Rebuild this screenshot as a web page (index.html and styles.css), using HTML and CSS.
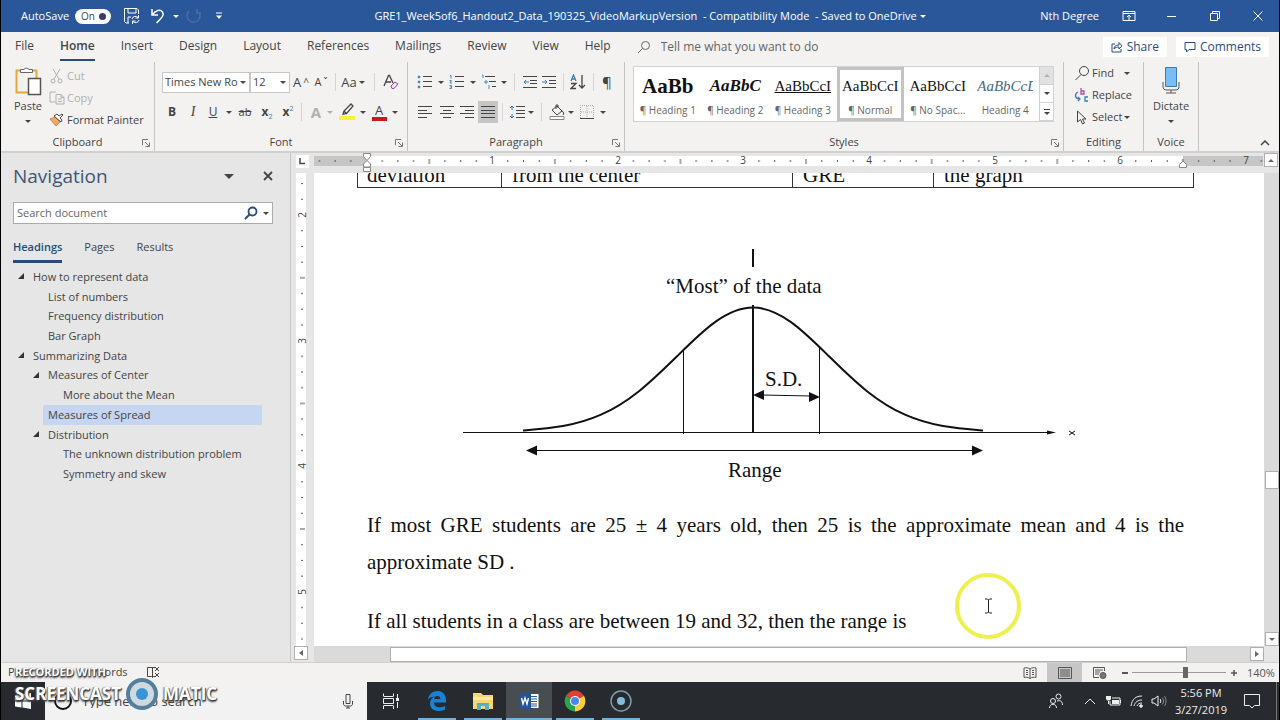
FILE: index.html
```html
<!DOCTYPE html>
<html lang="en">
<head>
<meta charset="utf-8">
<title>GRE1_Week5of6_Handout2_Data_190325_VideoMarkupVersion</title>
<link rel="stylesheet" href="styles.css">
</head>
<body>
<header class="titlebar">
  <div class="quick">
    <label class="autosave">AutoSave <input type="checkbox" role="switch" checked class="sr"><span class="switch">On</span></label>
    <button class="ghost w28" aria-label="Save"><svg width="18" height="18" viewBox="0 0 18 18"><path d="M15.500 7V3L14 1.500H1.500v13L3 16h3M5 1.500V6h8V1.500M5 16v-6h3M9 12a3.500 3.500 0 0 1 6-1.500M15.500 8v3h-3M16 13a3.500 3.500 0 0 1-6 1.500M9.500 17v-3h3"/></svg></button>
    <button class="ghost w28" aria-label="Undo"><svg width="16" height="18" viewBox="0 0 16 18"><path d="M2 2v6h6M2 8C6 3 10 2 12.500 5c2 3 0 5-6 11" stroke-width="1.500"/></svg></button>
    <button class="ghost w10" aria-label="Undo list"><i class="arrow"></i></button>
    <button class="ghost w28 dim" aria-label="Redo" disabled><svg width="18" height="18" viewBox="0 0 18 18"><path d="M12 2v4h4M4 4a6.500 6.500 0 1 0 10 1" stroke-width="1.500"/></svg></button>
    <button class="ghost w24" aria-label="Customize toolbar"><svg width="8" height="8" viewBox="0 0 8 8"><path d="M1 1h6"/><path d="M1 3.500h6L4 7z" fill="currentColor" stroke="none"/></svg></button>
  </div>
  <h1 class="doc-title">GRE1_Week5of6_Handout2_Data_190325_VideoMarkupVersion&nbsp; - Compatibility Mode&nbsp; - Saved to OneDrive&nbsp; <i class="arrow"></i></h1>
  <div class="window-tools">
    <span class="user">Nth Degree</span>
    <button class="ghost" aria-label="Ribbon display options"><svg width="14" height="12" viewBox="0 0 14 12"><path d="M1 1.500h12v9H1zM1 3.500h12M7 10V5M5 7l2-2 2 2"/></svg></button>
    <button class="ghost" aria-label="Minimize"><svg width="10" height="10" viewBox="0 0 10 10"><path d="M0 5.500h9"/></svg></button>
    <button class="ghost" aria-label="Restore"><svg width="10" height="10" viewBox="0 0 10 10"><path d="M.500 2.500h7v7h-7zM2.500 2.500v-2h7v7h-2"/></svg></button>
    <button class="ghost" aria-label="Close"><svg width="10" height="10" viewBox="0 0 10 10"><path d="M.500.500l9 9M9.500.500l-9 9"/></svg></button>
  </div>
</header>

<nav class="tabs" aria-label="Ribbon tabs">
  <button>File</button><button class="on">Home</button><button>Insert</button><button>Design</button><button>Layout</button><button>References</button><button>Mailings</button><button>Review</button><button>View</button><button>Help</button>
  <label class="tellme"><svg width="14" height="14" viewBox="0 0 14 14"><circle cx="8.500" cy="5.500" r="4"/><path d="M5.500 8.500L1 13"/></svg><input type="text" placeholder="Tell me what you want to do"></label>
  <div class="tab-end">
    <button class="pill"><svg width="12" height="12" viewBox="0 0 12 12"><path d="M4 3H1v8h9V8M3 8c0-3 2-4 5-4V1.500L11 5 8 8V6C6 6 4 6.500 3 8z"/></svg>Share</button>
    <button class="pill"><svg width="12" height="12" viewBox="0 0 12 12"><path d="M1 1.500h10v7H5L2.500 11V8.500H1z"/></svg>Comments</button>
  </div>
</nav>

<section class="ribbon" aria-label="Home">
  <div class="group clipboard">
    <div class="body">
      <button class="big"><svg width="28" height="30" viewBox="0 0 28 30"><path d="M6 4.500H2.500v22H14M19 4.500h3.500V12" stroke="#e3a73c" stroke-width="2"/><path d="M6.500 6.500v-3H10a3 3 0 0 1 5 0h3.500v3z" fill="#fff" stroke="#666"/><path d="M14.500 12.500h12v16h-12z" fill="#fff" stroke="#555" stroke-width="1.500"/></svg>Paste<i class="arrow"></i></button>
      <div class="stack">
        <button disabled><svg width="14" height="16" viewBox="0 0 14 16"><path d="M3 1l6 10M10 1L4 11"/><circle cx="3" cy="13" r="2"/><circle cx="10" cy="13" r="2"/></svg>Cut</button>
        <button disabled><svg width="16" height="14" viewBox="0 0 16 14"><path d="M6 11H1V1h6M7 3.500h5l3 3V13H7zM12 3.500v3h3M9 8h4M9 10.500h4"/></svg>Copy</button>
        <button><svg width="16" height="14" viewBox="0 0 16 14"><path d="M1 6l5-2 5 5-4 4z" fill="#f0a868" stroke="#d88640"/><path d="M5 3l7 6 1-2-2-2 3-3-1-1-3 2-2-2z" fill="#fff"/></svg>Format Painter</button>
      </div>
    </div>
    <div class="foot">Clipboard<svg width="8" height="8" viewBox="0 0 8 8"><path d="M.500 6V.500H6M3 3l4 4M7.500 3.500v4h-4"/></svg></div>
  </div>

  <div class="group font">
    <div class="body rows">
      <div class="row">
        <label class="combo family"><select aria-label="Font"><option>Times New Ro</option></select><i class="arrow"></i></label>
        <label class="combo size"><select aria-label="Font size"><option>12</option></select><i class="arrow"></i></label>
        <button class="w22 glyph" aria-label="Grow font">A<sup>^</sup></button><button class="w18 glyph small" aria-label="Shrink font">A<sup>ˇ</sup></button>
        <i class="sep w10"></i><button class="w26 glyph">Aa<i class="arrow"></i></button><i class="sep w16"></i>
        <button class="w18" aria-label="Clear formatting"><svg width="16" height="16" viewBox="0 0 16 16"><path d="M1 12L5.500 1.500h1L10 9M3 8h5" stroke-width="1.300"/><path d="M8 12l4-4 3 2-4 4.500H9z" stroke="#9a3fae" fill="#f4e3f7"/></svg></button>
      </div>
      <div class="row">
        <button class="w20 fx"><b>B</b></button><button class="w22 fx serif"><em>I</em></button><button class="w18 fx"><u>U</u></button><button class="w14" aria-label="Underline style"><i class="arrow"></i></button><button class="w18 fx strike">ab</button><button class="w26 fx"><b>x</b><sub>2</sub></button><button class="w16 fx"><b>x</b><sup>2</sup></button><i class="sep w10"></i>
        <button class="w20 outline-a" disabled>A</button><button class="w8" disabled aria-label="Text effects"><i class="arrow"></i></button>
        <button class="w26" aria-label="Highlight"><svg width="18" height="18" viewBox="0 0 18 18"><path d="M5 11l1-3 7-7 2 2-6 7-3 1zM6 8l3 3" stroke-width="1.300"/><path d="M1 13h16v4H1z" fill="#f6f330" stroke="none"/></svg></button><button class="w6" aria-label="Highlight colors"><i class="arrow"></i></button>
        <button class="w26 color-a">A</button><button class="w6" aria-label="Font colors"><i class="arrow"></i></button>
      </div>
    </div>
    <div class="foot">Font<svg width="8" height="8" viewBox="0 0 8 8"><path d="M.500 6V.500H6M3 3l4 4M7.500 3.500v4h-4"/></svg></div>
  </div>

  <div class="group para">
    <div class="body rows">
      <div class="row">
        <button class="w26" aria-label="Bullets"><svg width="16" height="14" viewBox="0 0 16 14"><path d="M6 1.500h9M6 6.500h9M6 11.500h9"/><path d="M1 1h2v2H1zM1 6h2v2H1zM1 11h2v2H1z" fill="#4b8ab5" stroke="#4b8ab5" stroke-width=".5"/></svg></button><button class="w6" aria-label="Bullet styles"><i class="arrow"></i></button>
        <button class="w26" aria-label="Numbering"><svg width="16" height="14" viewBox="0 0 16 14"><path d="M6 1.500h9M6 6.500h9M6 11.500h9"/><path d="M1 .500h1v3M.500 5.500h2L1 8h2M.500 10.500h2v3h-2M1 12h1" stroke="#4b8ab5"/></svg></button><button class="w6" aria-label="Number styles"><i class="arrow"></i></button>
        <button class="w26" aria-label="Multilevel list"><svg width="16" height="16" viewBox="0 0 16 16"><path d="M4 2.500h10M8 7.500h7M11 12.500h4"/><path d="M1 1h1v3M4 7h2v2H4zM8 11v4" stroke="#4b8ab5"/></svg></button><button class="w4" aria-label="List styles"><i class="arrow"></i></button>
        <i class="sep w16"></i>
        <button class="w16" aria-label="Decrease indent"><svg width="14" height="14" viewBox="0 0 14 14"><path d="M0 1.500h14M7 5.500h7M7 8.500h7M0 12.500h14"/><path d="M6 7H1M3 5L1 7l2 2" stroke="#3a7eb0"/></svg></button>
        <button class="w22" aria-label="Increase indent"><svg width="14" height="14" viewBox="0 0 14 14"><path d="M0 1.500h14M7 5.500h7M7 8.500h7M0 12.500h14"/><path d="M0 7h5M3 5l2 2-2 2" stroke="#3a7eb0"/></svg></button>
        <i class="sep w6"></i>
        <button class="w24" aria-label="Sort"><svg width="16" height="16" viewBox="0 0 16 16"><path d="M1 7l2.500-6L6 7M2 5h3" stroke="#3a7eb0" stroke-width="1.300"/><path d="M1 9.500h5l-5 5h5M12 1v13M9 11l3 3 3-3" stroke-width="1.300"/></svg></button>
        <i class="sep w6"></i><button class="w22 glyph pilcrow">¶</button>
      </div>
      <div class="row">
        <button class="w26" aria-label="Align left"><svg width="14" height="14" viewBox="0 0 14 14"><path d="M0 1.500h14M0 5.500h9M0 8.500h14M0 12.500h9"/></svg></button>
        <button class="w18" aria-label="Center"><svg width="14" height="14" viewBox="0 0 14 14"><path d="M0 1.500h14M3 5.500h8M0 8.500h14M3 12.500h8"/></svg></button>
        <button class="w22" aria-label="Align right"><svg width="14" height="14" viewBox="0 0 14 14"><path d="M0 1.500h14M5 5.500h9M0 8.500h14M5 12.500h9"/></svg></button>
        <button class="w20 pressed" aria-label="Justify"><svg width="14" height="14" viewBox="0 0 14 14"><path d="M0 1.500h14M0 5.500h14M0 8.500h14M0 12.500h14"/></svg></button>
        <i class="sep w8"></i>
        <button class="w22" aria-label="Line spacing"><svg width="16" height="14" viewBox="0 0 16 14"><path d="M7 1.500h9M7 5.500h9M7 8.500h9M7 12.500h9"/><path d="M3 1v4M1 3l2-2 2 2M3 9v4M1 11l2 2 2-2" stroke="#3a7eb0"/></svg></button><button class="w6" aria-label="Spacing options"><i class="arrow"></i></button>
        <i class="sep w14"></i>
        <button class="w18" aria-label="Shading"><svg width="16" height="16" viewBox="0 0 16 16"><path d="M3 6l5-4 5 5-5 4zM7 5V1h2v3M13 7c2 1 2 3 1 4"/><path d="M1 12.500h14v3H1z" fill="#fff" stroke="#888"/></svg></button><button class="w10" aria-label="Shading colors"><i class="arrow"></i></button>
        <button class="w22" aria-label="Borders"><svg width="14" height="14" viewBox="0 0 14 14"><path d="M.500 13V.500h13V13M7 1v12M1 7h12" stroke="#aaa" stroke-dasharray="1 1"/><path d="M0 13.500h14"/></svg></button><button class="w10" aria-label="Border options"><i class="arrow"></i></button>
      </div>
    </div>
    <div class="foot">Paragraph<svg width="8" height="8" viewBox="0 0 8 8"><path d="M.500 6V.500H6M3 3l4 4M7.500 3.500v4h-4"/></svg></div>
  </div>

  <div class="group styles">
    <div class="body">
      <div class="gallery">
        <button><span class="s1">AaBb</span>¶ Heading 1</button>
        <button><span class="s2">AaBbC</span>¶ Heading 2</button>
        <button><span class="s3">AaBbCcI</span>¶ Heading 3</button>
        <button class="sel"><span>AaBbCcI</span>¶ Normal</button>
        <button><span>AaBbCcI</span>¶ No Spac...</button>
        <button><span class="s4">AaBbCcD</span>Heading 4</button>
        <div class="gscroll"><button disabled aria-label="Up"><i class="arrow up"></i></button><button aria-label="Down"><i class="arrow"></i></button><button aria-label="More"><svg width="8" height="8" viewBox="0 0 8 8"><path d="M1 1.500h6"/><path d="M1 4h6L4 7z" fill="currentColor" stroke="none"/></svg></button></div>
      </div>
    </div>
    <div class="foot">Styles<svg width="8" height="8" viewBox="0 0 8 8"><path d="M.500 6V.500H6M3 3l4 4M7.500 3.500v4h-4"/></svg></div>
  </div>

  <div class="group editing">
    <div class="body">
      <div class="stack">
        <button><svg width="16" height="16" viewBox="0 0 16 16"><circle cx="10" cy="6" r="4.500"/><path d="M7 9.500L1.500 15"/></svg>Find<i class="arrow gap"></i></button>
        <button><svg width="16" height="16" viewBox="0 0 16 16"><path d="M7 1v6h3V4H7" stroke="#b0509f" stroke-width="1.300"/><path d="M14 10h-3v4h3M4 5c-4 2-3 7 2 7M4 10l2 2-2 2" stroke="#3a7eb0" stroke-width="1.300"/></svg>Replace</button>
        <button><svg width="16" height="16" viewBox="0 0 16 16"><path d="M3.500 2v11l3-2.500L8.500 15l2-1-2-4H12z"/></svg>Select<i class="arrow"></i></button>
      </div>
    </div>
    <div class="foot">Editing</div>
  </div>

  <div class="group voice">
    <div class="body">
      <button class="big"><svg width="20" height="30" viewBox="0 0 20 30"><path d="M4.500 1.500h11v19h-11z" fill="#78bdf5" stroke="#3d7cb3"/><path d="M2 16v4c0 3 1 4 4 4h8c3 0 4-1 4-4v-4M10 24v3M5 27h10" stroke="#555"/></svg>Dictate<i class="arrow"></i></button>
    </div>
    <div class="foot">Voice</div>
  </div>
  <div class="ribbon-end"><button aria-label="Collapse ribbon"><svg width="10" height="6" viewBox="0 0 10 6"><path d="M1 5l4-4 4 4" stroke-width="1.500"/></svg></button></div>
</section>

<main class="work">
  <aside class="pane">
    <div class="pane-head"><h2>Navigation</h2><button aria-label="Pane options"><i class="arrow large"></i></button><button aria-label="Close pane"><svg width="10" height="10" viewBox="0 0 10 10"><path d="M1 1l8 8M9 1L1 9" stroke-width="1.800"/></svg></button></div>
    <div class="search"><input type="text" placeholder="Search document" aria-label="Search document"><button aria-label="Search"><svg width="14" height="14" viewBox="0 0 14 14"><circle cx="8.500" cy="5.500" r="4" stroke="#2b4a7c" stroke-width="1.800"/><path d="M5.500 8.500L1 13" stroke="#2b4a7c" stroke-width="2"/></svg></button><button aria-label="Search options"><i class="arrow"></i></button></div>
    <div class="pane-tabs"><button class="on">Headings</button><button>Pages</button><button>Results</button></div>
    <ul class="tree">
      <li class="l1 open"><a href="#">How to represent data</a></li>
      <li class="l2"><a href="#">List of numbers</a></li>
      <li class="l2"><a href="#">Frequency distribution</a></li>
      <li class="l2"><a href="#">Bar Graph</a></li>
      <li class="l1 open"><a href="#">Summarizing Data</a></li>
      <li class="l2 open"><a href="#">Measures of Center</a></li>
      <li class="l3"><a href="#">More about the Mean</a></li>
      <li class="l2 here"><a href="#">Measures of Spread</a></li>
      <li class="l2 open"><a href="#">Distribution</a></li>
      <li class="l3"><a href="#">The unknown distribution problem</a></li>
      <li class="l3"><a href="#">Symmetry and skew</a></li>
    </ul>
  </aside>

  <div class="editor">
    <button class="tabstop" aria-label="Tab stop"><svg width="7" height="7" viewBox="0 0 7 7"><path d="M1 0v5.500h5" stroke-width="1.500"/></svg></button>
    <div class="hruler"><svg width="949" height="20" viewBox="0 0 949 20">
      <defs><pattern id="ticks" x="52.500" y="0" width="125.600" height="20" patternUnits="userSpaceOnUse"><path d="M15.700 7v2M31.400 7v2M47.100 7v2M62.800 6v5M78.500 7v2M94.200 7v2M109.900 7v2" stroke="#555"/></pattern></defs>
      <path d="M0 3h949v10H0z" fill="#fff" stroke="none"/><path d="M0 3h53v10H0zM869 3h80v10h-80z" fill="#c6c6c6" stroke="none"/>
      <path d="M0 0h949v20H0z" fill="url(#ticks)" stroke="none"/>
      <g class="num"><text x="178" y="11">1</text><text x="304" y="11">2</text><text x="429" y="11">3</text><text x="555" y="11">4</text><text x="681" y="11">5</text><text x="806" y="11">6</text><text x="932" y="11">7</text></g>
      <path d="M49.500.500h7v3L53 7.500l-3.500-4zM49.500 14v-3L53 7.500l3.500 3.500v3zM49.500 14.500h7v4h-7zM865.500 14.500v-3L869 8l3.500 3.500v3z" fill="#fff" stroke="#888"/>
    </svg></div>
    <button class="sbtn vtop" aria-label="Scroll up"><i class="arrow up"></i></button>

    <div class="vruler"><svg width="20" height="473" viewBox="0 0 20 473">
      <defs><pattern id="vticks" x="0" y="42" width="20" height="125.600" patternUnits="userSpaceOnUse"><path d="M7 15.700h2M7 31.400h2M7 47.100h2M6 62.800h5M7 78.500h2M7 94.200h2M7 109.900h2" stroke="#555"/></pattern></defs>
      <path d="M2 0h10v473H2z" fill="#fff" stroke="none"/><path d="M0 0h20v473H0z" fill="url(#vticks)" stroke="none"/>
      <g class="num"><text transform="translate(12 42) rotate(-90)">2</text><text transform="translate(12 168) rotate(-90)">3</text><text transform="translate(12 293) rotate(-90)">4</text><text transform="translate(12 419) rotate(-90)">5</text></g>
    </svg></div>
    <article class="page">
      <div class="flow">
      <table><tr><td class="c1">deviation</td><td class="c2">from the center</td><td class="c1">GRE</td><td>the graph</td></tr></table>
      <figure>
        <svg class="chart" width="640" height="250" viewBox="0 0 640 250">
          <path d="M303 9v18M303 65v127" stroke-width="2"/>
          <path id="half" d="M303 67.500C315.700 67.500 328.300 73 341 82.100C353.700 91.200 366.300 103.800 379 116.300C391.700 128.800 404.300 141.100 417 151.200C429.700 161.300 442.300 169.100 455 174.700C467.700 180.300 480.300 183.800 493 186.100C505.700 188.400 518.300 189.400 533 190.600" stroke-width="2"/>
          <use href="#half" transform="translate(606 0) scale(-1 1)"/>
          <path d="M233.500 110v84M369.500 108v86"/>
          <path d="M13 192.500h588M312 155l49 1M85 210.500h440"/>
          <path d="M606 192.500l-9-2v4zM303 155l11-5v10zM370 157l-11-5v10zM76 210.500l11-5v10zM533 210.500l-11-5v10z" fill="#111" stroke="none"/>
          <path d="M619 191l6 4M625 191l-6 4"/>
          <text x="216" y="53">“Most” of the data</text><text x="315" y="146">S.D.</text><text x="278" y="237">Range</text>
        </svg>
      </figure>
      <p>If most GRE students are 25 ± 4 years old, then 25 is the approximate mean and 4 is the approximate SD .</p>
      <p>If all students in a class are between 19 and 32, then the range is</p>
      </div>
    </article>
    <div class="vtrack"><div class="vthumb"></div><button class="sbtn" aria-label="Scroll down"><i class="arrow"></i></button></div>

    <button class="sbtn hleft" aria-label="Scroll left"><i class="arrow left"></i></button>
    <div class="htrack"><div class="hthumb"></div><button class="sbtn" aria-label="Scroll right"><i class="arrow right"></i></button></div>
    <div></div>
  </div>
</main>

<footer class="status">
  <span class="pg">Pa</span><span class="words">words</span>
  <svg width="14" height="14" viewBox="0 0 14 14"><path d="M6.500 12.500V2.500h-5v9h4l1 1 1-1h2M6.500 2.500h3M9 2l4 4M13 2L9 6M9 8l4 4M13 8l-4 4"/></svg>
  <div class="views">
    <button aria-label="Read mode"><svg width="14" height="12" viewBox="0 0 14 12"><path d="M7 2v9.500M7 2C5 .500 3 .500 1 1v9.500c2-.500 4-.500 6 1 2-1.500 4-1.500 6-1V1c-2-.500-4-.500-6 1M3 3.500h2M3 5.500h2M3 7.500h2M9 3.500h2M9 5.500h2M9 7.500h2"/></svg></button>
    <button class="on" aria-label="Print layout"><svg width="14" height="12" viewBox="0 0 14 12"><path d="M.500.500h13v11H.500zM2 3h10M2 5h10M2 7h10M2 9h10"/></svg></button>
    <button aria-label="Web layout"><svg width="14" height="14" viewBox="0 0 14 14"><path d="M6 11.500H.500v-10h11V5M2 4h8M2 6h5M2 8h4"/><circle cx="10" cy="9.500" r="3" fill="#777"/></svg></button>
    <button class="zb" aria-label="Zoom out"><svg width="8" height="8" viewBox="0 0 8 8"><path d="M1 4h6" stroke-width="2"/></svg></button>
    <input type="range" min="0" max="100" value="57" aria-label="Zoom">
    <button class="zb" aria-label="Zoom in"><svg width="8" height="8" viewBox="0 0 8 8"><path d="M1 4h6M4 1v6" stroke-width="1.500"/></svg></button>
    <span class="zoom">140%</span>
  </div>
</footer>

<footer class="taskbar">
  <button class="start" aria-label="Start"><svg width="16" height="16" viewBox="0 0 16 16"><path d="M0 2.500l6.500-1v6H0zM7.500 1.400L16 0v7.500H7.500zM0 8.500h6.500v6L0 13.500zM7.500 8.500H16V16l-8.500-1.400z" fill="#fff" stroke="none"/></svg></button>
  <label class="finder"><svg width="20" height="20" viewBox="0 0 20 20"><circle cx="10" cy="10" r="8" stroke="#111" stroke-width="2"/></svg><input type="text" placeholder="Type here to search"><svg width="12" height="16" viewBox="0 0 12 16"><path d="M4 1.500h4v9H4zM1.500 8v3c0 1 1 2 2 2h5c1 0 2-1 2-2V8M6 13v2M4 15h4"/></svg></label>
  <div class="apps">
    <button aria-label="Task view"><svg width="16" height="16" viewBox="0 0 16 16"><path d="M.500 3V.500M10.500 3V.500M.500 3.500h10M.500 5.500h10v5H.500zM.500 12.500h10M.500 13v3M10.500 13v3M14.500 1v4M14.500 9v6" stroke="#eee"/><path d="M13 5h3v3h-3z" fill="#eee" stroke="none"/></svg></button>
    <button class="run" aria-label="Edge"><svg width="20" height="20" viewBox="0 0 20 20"><path d="M1 9C1.500 3 6 0 10.500 0 16 0 19 4 19 9v2.500H7c0 5 6 6 11 3.500V18.500C12 21.500 3 20 3 12.500 3 9 5 6.500 8 5.500 4.500 5.500 2 7 1 9zM7 8h6.500c0-4-6-4-6.500 0z" fill="#1583d8" stroke="none"/></svg></button>
    <button class="run" aria-label="File Explorer"><svg width="20" height="18" viewBox="0 0 20 18"><path d="M0 1h8l2 2h10v14H0z" fill="#f7d774" stroke="none"/><path d="M0 5h20v3H0z" fill="#fbe9a5" stroke="none"/><path d="M4 18v-7h12v7h-4v-4H8v4z" fill="#4fb3c9" stroke="none"/></svg></button>
    <button class="run active" aria-label="Word"><svg width="20" height="18" viewBox="0 0 20 18"><path d="M9 2h10.500v14H9z" fill="#fff" stroke="none"/><path d="M12 4.500h6M12 7h6M12 9.500h6M12 12h6M12 14h6" stroke="#2b579a"/><path d="M0 2l12-2v18L0 16z" fill="#23539c" stroke="none"/><path d="M2.500 6l1.500 6 2-6 2 6 1.500-6" stroke="#fff" stroke-width="1.400"/></svg></button>
    <button class="run" aria-label="Chrome"><svg width="22" height="22" viewBox="0 0 22 22"><g stroke="none"><path d="M11 11L2 5.800A10.400 10.400 0 0 1 20 5.800z" fill="#e0402f"/><path d="M11 11L2 5.800A10.400 10.400 0 0 0 11 21.400z" fill="#2fa24f"/><path d="M11 11h0L20 5.800A10.400 10.400 0 0 1 11 21.400z" fill="#fbce3a"/><circle cx="11" cy="11" r="5" fill="#fff"/><circle cx="11" cy="11" r="4" fill="#4a87ee"/></g></svg></button>
    <button class="run" aria-label="Recorder"><svg width="22" height="22" viewBox="0 0 22 22"><circle cx="11" cy="11" r="10" stroke="#7d9cab" stroke-width="1.500"/><circle cx="11" cy="11" r="4" fill="#83bdd8" stroke="none"/></svg></button>
  </div>
  <div class="tray">
    <button class="w40" aria-label="People"><svg width="14" height="16" viewBox="0 0 14 16"><circle cx="9.500" cy="3.500" r="2.500"/><circle cx="4" cy="8" r="2.500"/><path d="M.500 15c0-5 7-5 7 0M8 8c3-1 5.500 0 5.500 4"/></svg></button>
    <button class="w24" aria-label="Show hidden icons"><svg width="12" height="8" viewBox="0 0 12 8"><path d="M1 7l5-5 5 5"/></svg></button>
    <button class="w24" aria-label="Battery"><svg width="16" height="12" viewBox="0 0 16 12"><path d="M6 3h8v7H4V6M14.500 5v3"/><path d="M6 5h7v4H6zM0 1h5v3c-1 2-4 2-5 0zM2 5v4h1V5z" fill="#eee" stroke="none"/></svg></button>
    <button class="w22" aria-label="Wi-Fi"><svg width="14" height="14" viewBox="0 0 14 14"><path d="M1 12C2 5 6 2 12 2M4 12c1-4 4-6 8-6M7 12c1-2 2-3 5-3"/><circle cx="11" cy="12" r="1.300" fill="#eee"/></svg></button>
    <button class="w22" aria-label="Volume"><svg width="16" height="12" viewBox="0 0 16 12"><path d="M1 4h2l4-3v10L3 8H1zM9 4c1 1 1 3 0 4"/><path d="M11 2.500c2 2 2 5 0 7M13.500 1c2 3 2 7 0 10" opacity=".5"/></svg></button>
    <div class="clock"><span>5:56 PM</span><span>3/27/2019</span></div>
    <button class="w40" aria-label="Notifications"><svg width="16" height="16" viewBox="0 0 16 16"><path d="M.500 1.500h15v11h-5L8 15l-2.500-2.500h-5z"/></svg></button>
    <i class="desk"></i>
  </div>
</footer>

<div class="watermark"><span class="rec">RECORDED WITH</span><div class="brand"><span class="sc">SCREENCAST</span><svg width="34" height="34" viewBox="0 0 34 34"><circle cx="17" cy="17" r="14" fill="#cfd9df" stroke="#527f9c" stroke-width="4"/><circle cx="17" cy="17" r="6" fill="#3a93d6" stroke="none"/></svg><span class="sc">MATIC</span></div></div>
<svg class="pointer" width="68" height="68" viewBox="0 0 68 68"><circle cx="34" cy="34" r="31" stroke="#eef04e" stroke-width="4"/><path d="M31 27h2.500l1 1 1-1H38M34.500 28v12M31 41h2.500l1-1 1 1H38" stroke="#222"/></svg>
</body>
</html>
```
FILE: styles.css
```css
* { box-sizing: border-box; }
body { margin: 0; height: 100vh; min-height: 720px; display: flex; flex-direction: column; border: solid #000; border-width: 0 1px; background: #e6e6e6; color: #444; font: 11px/14px "Open Sans", "Noto Sans", sans-serif; overflow: hidden; position: relative; }
button { font: inherit; color: inherit; background: none; border: 0; padding: 0; display: flex; align-items: center; justify-content: center; flex: none; white-space: nowrap; }
input, select { font: inherit; color: inherit; border: 0; padding: 0; margin: 0; background: none; min-width: 0; }
input::placeholder { color: inherit; opacity: 1; }
svg { display: block; flex: none; fill: none; stroke: currentColor; }
h1, h2, p, ul, figure { margin: 0; padding: 0; font-weight: normal; }
.sr { position: absolute; opacity: 0; }
.arrow { display: inline-block; flex: none; border: 3px solid transparent; border-top-color: currentColor; border-bottom: 0; }
.arrow.up { border: 3px solid transparent; border-bottom-color: currentColor; border-top: 0; }
.arrow.left { border: 3px solid transparent; border-right: 4px solid currentColor; border-left: 0; }
.arrow.right { border: 3px solid transparent; border-left: 4px solid currentColor; border-right: 0; }
.arrow.large { border-width: 5px 5px 0; }
.w4 { width: 4px; } .w6 { width: 6px; } .w8 { width: 8px; } .w10 { width: 10px; } .w14 { width: 14px; } .w16 { width: 16px; } .w18 { width: 18px; } .w20 { width: 20px; } .w22 { width: 22px; } .w24 { width: 24px; } .w26 { width: 26px; } .w28 { width: 28px; } .w40 { width: 40px; }

.titlebar { height: 32px; flex: none; display: flex; align-items: center; background: #2a579a; color: #fff; }
.quick { display: flex; align-items: center; flex: 1 1 0; padding-left: 20px; }
.quick .w28 { width: 26px; }
.autosave { display: flex; align-items: center; gap: 6px; margin-right: 8px; }
.switch { position: relative; width: 36px; height: 15px; border-radius: 8px; background: #fff; color: #444; font-size: 10px; line-height: 15px; padding-left: 6px; }
.switch::after { content: ""; position: absolute; right: 5px; top: 4px; width: 7px; height: 7px; border-radius: 4px; background: #3b3a6b; }
.dim { opacity: .25; }
.doc-title { font-size: 11px; display: flex; align-items: center; white-space: nowrap; }
.window-tools { display: flex; flex: 1 1 0; align-items: center; justify-content: flex-end; }
.window-tools button { width: 43px; height: 32px; }
.user { margin-right: 8px; }

.tabs { height: 30px; flex: none; display: flex; align-items: center; gap: 26px; background: #f3f2f1; padding: 0 10px 0 14px; font-size: 12px; }
.tabs > button { height: 27px; border-bottom: 2px solid transparent; }
.tabs > button.on { font-weight: 600; border-color: #2b4a7c; }
.tellme { display: flex; align-items: center; gap: 10px; flex: 1; color: #666; }
.tellme input { flex: 1; }
.tab-end { display: flex; gap: 9px; }
.pill { background: #fff; color: #2b4a7c; height: 20px; padding: 0 8px; gap: 4px; }

.ribbon { height: 91px; flex: none; display: flex; background: #f3f2f1; border-bottom: 2px solid #d0d0d0; }
.group { display: flex; flex-direction: column; flex: none; border-right: 1px solid #c4c4c4; }
.body { flex: 1; display: flex; min-height: 0; padding-top: 4px; }
.rows { flex-direction: column; padding-top: 9px; gap: 8px; }
.row { display: flex; align-items: center; height: 22px; }
.row button { height: 22px; }
.foot { height: 18px; flex: none; line-height: 18px; text-align: center; position: relative; }
.foot svg { position: absolute; right: 4px; top: 6px; color: #777; }
.clipboard { width: 154px; } .font { width: 253px; } .para { width: 217px; } .styles { width: 439px; } .editing { width: 80px; } .voice { width: 55px; }
.font .body { padding-left: 7px; }
.para .body { padding-left: 4px; }
.big { flex-direction: column; width: 54px; justify-content: flex-start; gap: 3px; }
.big .arrow { margin-top: 4px; }
.stack { display: flex; flex-direction: column; }
.stack button { height: 22px; gap: 2px; justify-content: flex-start; }
.stack svg { width: 16px; }
button:disabled { color: #b0b0b0; }
.clipboard .stack { margin: -1px 0 0 -6px; }
.combo { position: relative; display: flex; height: 21px; background: #fff; border: 1px solid #c8c8c8; }
.combo select { appearance: none; width: 100%; padding-left: 2px; }
.combo .arrow { position: absolute; right: 3px; top: 8px; }
.family { width: 88px; } .size { width: 40px; }
.sep { align-self: stretch; margin: 2px 0; background: linear-gradient(#d5d5d5, #d5d5d5) center / 1px 100% no-repeat; }
.glyph { font-size: 13px; gap: 2px; }
.glyph sup { font-size: 10px; line-height: 8px; }
.pilcrow { font-size: 15px; }
.small { font-size: 11px; }
.fx { font-size: 12px; }
.fx sub, .fx sup { font-size: 7px; line-height: 7px; color: #3a7eb0; }
.fx sub { align-self: flex-end; margin-bottom: 3px; } .fx sup { align-self: flex-start; margin-top: 4px; }
.serif { font-family: "Liberation Serif", serif; font-size: 14px; }
.strike { text-decoration: line-through; font-size: 11px; }
.outline-a { font-size: 15px; font-weight: bold; }
.color-a { font-size: 13px; background: linear-gradient(#c8191f, #c8191f) center bottom 2px / 15px 4px no-repeat; padding-bottom: 4px; }
.pressed { background: #c6c6c6; }
.styles .body { padding: 4px 9px 12px 8px; }
.gallery { flex: 1; display: flex; background: #fff; border: 1px solid #d2d2d2; height: 56px; }
.gallery > button { flex: 1 1 0; min-width: 0; flex-direction: column; justify-content: flex-end; gap: 5px; overflow: hidden; font-size: 10px; line-height: 15px; border: 3px solid transparent; color: #666; }
.gallery .sel { border-color: #c3c3c3; }
.gallery span { font: 15px/24px "Liberation Serif", serif; color: #111; height: 24px; }
.gallery .s1 { font-size: 21px; font-weight: bold; }
.gallery .s2 { font-size: 17px; font-weight: bold; font-style: italic; }
.gallery .s3 { text-decoration: underline; }
.gallery .s4 { font-style: italic; color: #4a6a80; max-width: 56px; overflow: hidden; }
.gscroll { width: 14px; display: flex; flex-direction: column; border-left: 1px solid #d2d2d2; }
.gscroll button { flex: 1; border-bottom: 1px solid #d2d2d2; }
.gscroll button:disabled { background: #e1e1e1; }
.editing .body { padding: 0 0 0 10px; }
.gap { margin-left: 8px; }
.ribbon-end { flex: 1; display: flex; justify-content: flex-end; align-items: flex-end; padding: 0 9px 5px 0; }

.work { flex: 1; min-height: 0; display: flex; }
.pane { width: 290px; flex: none; border-right: 1px solid #c6c6c6; padding: 9px 17px 0 12px; }
.pane-head { display: flex; align-items: center; height: 28px; }
.pane h2 { flex: 1; font-size: 19px; line-height: 28px; color: #3f5777; }
.pane-head button { width: 20px; margin-left: 24px; margin-right: -5px; }
.search { display: flex; height: 22px; background: #fff; border: 1px solid #ababab; margin-top: 12px; }
.search input { flex: 1; padding-left: 3px; color: #666; }
.search button { width: 18px; }
.search button:last-child { width: 12px; }
.pane-tabs { display: flex; gap: 22px; margin-top: 9px; }
.pane-tabs button { height: 30px; border-bottom: 3px solid transparent; }
.pane-tabs .on { color: #1e4e79; font-weight: 600; border-color: #2b4a7c; }
.tree { list-style: none; display: grid; grid-auto-rows: 1fr; height: 217px; margin-top: 4px; }
.tree li { display: flex; align-items: center; position: relative; margin-right: 11px; }
.tree a { color: #444; text-decoration: none; }
.l1 { padding-left: 20px; } .l2 { padding-left: 5px; margin-left: 30px; } .l3 { padding-left: 5px; margin-left: 45px; }
.open::before { content: ""; position: absolute; left: 5px; top: 6px; border-left: 6px solid transparent; border-bottom: 6px solid #333; }
.l2.open::before { left: -10px; }
.here { background: #c5d5f2; }

.editor { flex: 1; min-width: 0; margin-left: 3px; display: grid; grid-template-columns: 20px minmax(0, 1fr) 15px; grid-template-rows: 20px minmax(0, 1fr) 16px; }
.tabstop { width: 13px; height: 13px; margin: 2px; background: #fff; }
.hruler, .vruler { overflow: hidden; }
.num text { font: 10px "Open Sans", "Noto Sans", sans-serif; fill: #444; stroke: none; text-anchor: middle; }
.sbtn { width: 14px; height: 14px; background: #fff; border: 1px solid #b0b0b0; color: #666; }
.page { background: #fff; min-height: 0; padding-bottom: 14px; display: flex; }
.flow { flex: 1; min-width: 0; overflow: hidden; padding: 0 80px 0 53px; color: #111; font: 21px/37px "Liberation Serif", serif; }
.page table { border-collapse: collapse; width: calc(100% + 20px); margin: -11px -10px 0; table-layout: fixed; line-height: 24px; }
.page td { border: 1px solid #333; padding: 0 10px; white-space: nowrap; }
.page td:first-child { width: 144px; }
.c2 { width: 291px; } .c1 { width: 141px; }
.page td:first-child { padding-left: 9px; }
figure { margin: 52px 0 0 83px; }
.chart { color: #111; overflow: visible; }
.chart text { font: 21px "Liberation Serif", serif; fill: #111; stroke: none; }
.page p { text-align: justify; margin-top: 17px; }
.page p + p { margin-top: 22px; }
.vtrack { background: #dadada; display: flex; flex-direction: column; justify-content: space-between; align-items: center; }
.vthumb { width: 14px; height: 18px; margin-top: 298px; background: #fff; border: 1px solid #b0b0b0; }
.htrack { display: flex; justify-content: space-between; align-items: center; background: #dadada; padding-left: 76px; }
.hthumb { flex: 1; height: 15px; margin-right: 63px; background: #fff; border: 1px solid #b0b0b0; }

.status { height: 20px; flex: none; display: flex; align-items: center; background: #f3f2f1; border-top: 1px solid #d0d0d0; padding: 0 0 2px 7px; }
.pg { width: 88px; } .words { width: 50px; }
.views { margin-left: auto; display: flex; align-items: center; height: 19px; margin-bottom: -2px; color: #555; }
.views button { width: 35px; height: 100%; }
.views .on { background: #c6c6c6; }
.views .zb { width: 15px; }
.views input { appearance: none; width: 94px; height: 13px; background: linear-gradient(#999, #999) center / 100% 1px no-repeat; }
.views input::-webkit-slider-thumb { appearance: none; width: 5px; height: 11px; background: #666; }
.zoom { width: 38px; padding-left: 6px; }

.taskbar { height: 38px; flex: none; display: flex; background: #272b30; color: #eee; }
.start { width: 44px; }
.finder { width: 322px; display: flex; align-items: center; background: #f2f2f2; color: #444; padding: 0 13px 0 8px; gap: 9px; font-size: 13px; }
.finder input { flex: 1; }
.apps { display: flex; padding-left: 1px; }
.apps button { width: 46px; }
.apps .run { background: linear-gradient(#76b0dc, #76b0dc) center bottom / 38px 2px no-repeat; }
.apps .active { background-color: #484d51; background-size: 46px 2px; }
.tray { margin-left: auto; display: flex; align-items: center; }
.tray button { height: 38px; }
.tray .w40:first-child { width: 44px; }
.clock { width: 62px; display: flex; flex-direction: column; align-items: center; line-height: 17px; }
.desk { width: 3px; height: 38px; border-left: 1px solid #777; margin-left: 4px; }

.watermark { position: absolute; left: 14px; top: 665px; color: #fff; font-weight: bold; text-shadow: 1px 1px 1px #333, -1px 0 1px #777, 0 2px 2px #444; pointer-events: none; }
.rec { display: block; font-size: 11px; line-height: 14px; }
.brand { display: flex; align-items: center; gap: 4px; height: 29px; }
.sc { font-size: 17px; line-height: 29px; }
.pointer { position: absolute; left: 953px; top: 572px; pointer-events: none; }
```
